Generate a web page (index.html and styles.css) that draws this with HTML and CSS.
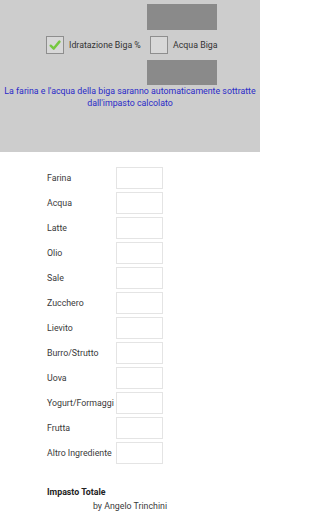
FILE: index.html
```html
<!DOCTYPE html>
<html lang="it">
<head>
<meta charset="utf-8">
<link rel="stylesheet" href="styles.css">
</head>
<body>
<div class="page">
<section class="biga">
  <div class="gray-field first"></div>
  <div class="biga-row">
    <span class="cb checked">
      <svg viewBox="0 0 18 18" width="16" height="16"><path d="M4.2 9.8 L7.6 13 L14 5.2" fill="none" stroke="#76c840" stroke-width="2.8" stroke-linecap="round" stroke-linejoin="round"/></svg>
    </span>
    <span class="cb-label">Idratazione Biga %</span>
    <span class="cb"></span>
    <span class="cb-label">Acqua Biga</span>
  </div>
  <div class="gray-field second"></div>
  <p class="note">La farina e l'acqua della biga saranno automaticamente sottratte dall'impasto calcolato</p>
</section>
<section class="ingredients">
  <div class="row"><span class="lbl">Farina</span><span class="inp"></span></div>
  <div class="row"><span class="lbl">Acqua</span><span class="inp"></span></div>
  <div class="row"><span class="lbl">Latte</span><span class="inp"></span></div>
  <div class="row"><span class="lbl">Olio</span><span class="inp"></span></div>
  <div class="row"><span class="lbl">Sale</span><span class="inp"></span></div>
  <div class="row"><span class="lbl">Zucchero</span><span class="inp"></span></div>
  <div class="row"><span class="lbl">Lievito</span><span class="inp"></span></div>
  <div class="row"><span class="lbl">Burro/Strutto</span><span class="inp"></span></div>
  <div class="row"><span class="lbl">Uova</span><span class="inp"></span></div>
  <div class="row"><span class="lbl">Yogurt/Formaggi</span><span class="inp"></span></div>
  <div class="row"><span class="lbl">Frutta</span><span class="inp"></span></div>
  <div class="row"><span class="lbl">Altro Ingrediente</span><span class="inp"></span></div>
</section>
<div class="total">Impasto Totale</div>
<div class="author">by Angelo Trinchini</div>
</div>
</body>
</html>
```
FILE: styles.css
```css
html, body {
  margin: 0;
  padding: 0;
  background: #ffffff;
  font-family: Roboto, "Liberation Sans", sans-serif;
  font-size: 8.8px;
  color: #3a3a3a;
}
.page {
  width: 260px;
  overflow: hidden;
}
.biga {
  background: #cdcdcd;
  height: 152px;
  padding-top: 4px;
  box-sizing: border-box;
}
.gray-field {
  margin-left: 147px;
  width: 70px;
  height: 26px;
  background: #8a8a8a;
}
.gray-field.second {
  margin-top: 6px;
  height: 25px;
}
.biga-row {
  display: flex;
  align-items: center;
  height: 18px;
  margin-top: 6px;
  padding-left: 46px;
}
.cb {
  width: 18px;
  height: 18px;
  box-sizing: border-box;
  border: 1px solid #8e8e8e;
  background: #d8d8d8;
  display: flex;
  align-items: center;
  justify-content: center;
  flex: none;
}
.cb-label {
  margin-left: 5px;
  width: 81px;
  color: #333333;
  white-space: nowrap;
}
.note {
  margin: 1px 0 0;
  padding: 0 4px;
  text-align: center;
  color: #2a2ac8;
  line-height: 11.5px;
}
.ingredients {
  display: flex;
  flex-direction: column;
  gap: 3px;
  padding: 15px 0 0 47px;
}
.row {
  display: flex;
  align-items: center;
  height: 22px;
}
.lbl {
  width: 69px;
  color: #3a3a3a;
  white-space: nowrap;
}
.inp {
  width: 47px;
  height: 22px;
  box-sizing: border-box;
  border: 1px solid #e4e4e4;
  background: #ffffff;
}
.total {
  margin-top: 23px;
  padding-left: 47px;
  font-weight: bold;
  color: #222222;
  line-height: 11px;
}
.author {
  margin-top: 3px;
  text-align: center;
  color: #3a3a3a;
  line-height: 11px;
}
```
